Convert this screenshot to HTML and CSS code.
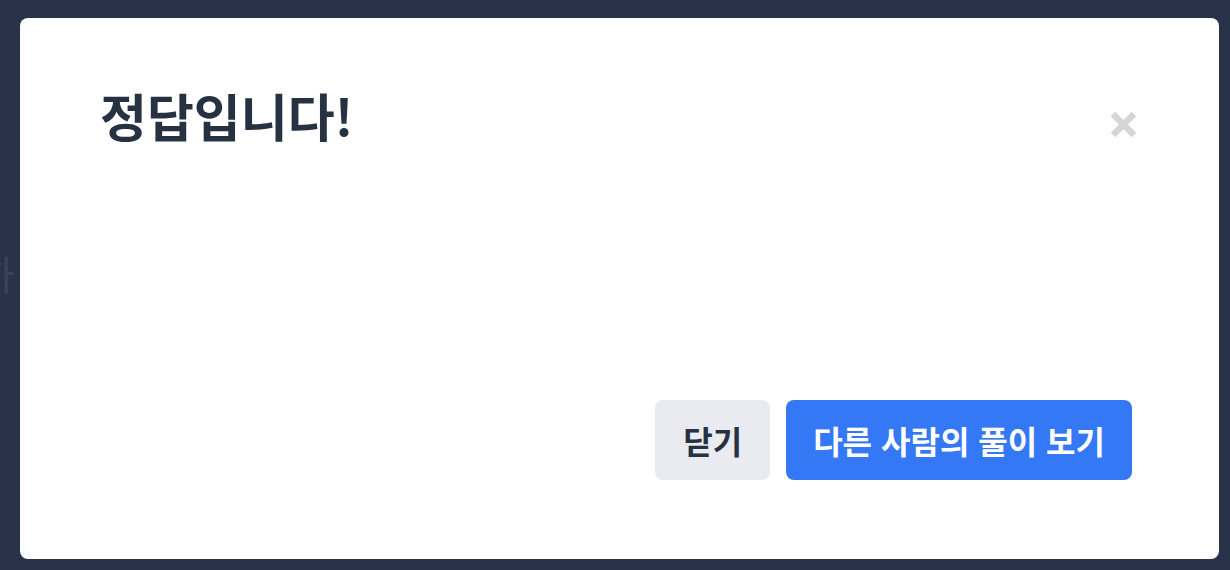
FILE: index.html
```html
<!DOCTYPE html>
<html lang="ko">

<head>
    <meta charset="UTF-8" />
    <meta name="viewport" content="width=device-width, initial-scale=1.0" />
    <title>정답입니다!</title>
    <link rel="stylesheet" href="styles.css">
</head>

<body>
    <div class="backdrop-text">하</div>

    <div class="modal">
        <div class="modal-header">
            <h1 class="modal-title">정답입니다!</h1>
            <button class="close-btn" aria-label="닫기">
                <svg width="27" height="27" viewBox="0 0 27 27">
                    <path d="M3 3 L24 24 M24 3 L3 24" stroke="#d5d5d5" stroke-width="6.5" fill="none" />
                </svg>
            </button>
        </div>

        <div class="modal-body"></div>

        <div class="modal-footer">
            <button class="btn btn-gray">닫기</button>
            <button class="btn btn-blue">다른 사람의 풀이 보기</button>
        </div>
    </div>
</body>

</html>
```

FILE: styles.css
```css
body {
    margin: 0;
    height: 570px;
    background: #283249;
    font-family: 'Noto Sans CJK KR', 'Noto Sans', sans-serif;
    padding: 18px 11px 11px 20px;
    box-sizing: border-box;
    overflow: hidden;
}

.backdrop-text {
    position: absolute;
    left: -22px;
    top: 244px;
    font-size: 40px;
    color: #3a4458;
}

.modal {
    position: relative;
    background: #fff;
    border-radius: 8px;
    height: 541px;
    box-sizing: border-box;
    padding: 67px 87px 79px 80px;
    display: flex;
    flex-direction: column;
}

.modal-header {
    display: flex;
    justify-content: space-between;
    align-items: flex-start;
}

.modal-title {
    margin: 0;
    font-size: 51px;
    font-weight: 700;
    color: #263142;
    line-height: 1.2;
}

.close-btn {
    background: none;
    border: none;
    padding: 0;
    margin-right: -5px;
    margin-top: 26px;
    cursor: pointer;
    display: flex;
}

.modal-body {
    flex: 1;
}

.modal-footer {
    display: flex;
    justify-content: flex-end;
    gap: 16px;
}

.btn {
    height: 80px;
    padding: 0 27px;
    border: none;
    border-radius: 8px;
    font-family: inherit;
    font-size: 32px;
    font-weight: 700;
    cursor: pointer;
}

.btn-gray {
    padding: 0 28px;
    background: #e9ebf0;
    color: #263142;
}

.btn-blue {
    background: #3478f6;
    color: #fff;
}
```
